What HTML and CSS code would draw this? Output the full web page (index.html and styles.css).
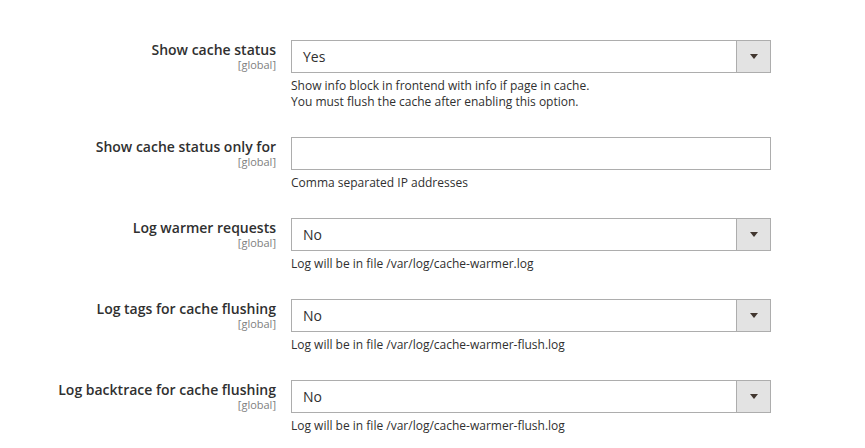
FILE: index.html
```html
<!DOCTYPE html>
<html lang="en">
<head>
<meta charset="utf-8">
<title>Cache settings</title>
<link rel="stylesheet" href="styles.css">
</head>
<body>
<div class="config">
  <div class="label"><span class="label-text">Show cache status</span><span class="scope">[global]</span></div>
  <div class="value">
    <div class="select"><span class="select-value">Yes</span><span class="select-arrow"></span></div>
    <div class="note">Show info block in frontend with info if page in cache.<br>You must flush the cache after enabling this option.</div>
  </div>

  <div class="label"><span class="label-text">Show cache status only for</span><span class="scope">[global]</span></div>
  <div class="value">
    <div class="input"></div>
    <div class="note">Comma separated IP addresses</div>
  </div>

  <div class="label"><span class="label-text">Log warmer requests</span><span class="scope">[global]</span></div>
  <div class="value">
    <div class="select"><span class="select-value">No</span><span class="select-arrow"></span></div>
    <div class="note">Log will be in file /var/log/cache-warmer.log</div>
  </div>

  <div class="label"><span class="label-text">Log tags for cache flushing</span><span class="scope">[global]</span></div>
  <div class="value">
    <div class="select"><span class="select-value">No</span><span class="select-arrow"></span></div>
    <div class="note">Log will be in file /var/log/cache-warmer-flush.log</div>
  </div>

  <div class="label"><span class="label-text">Log backtrace for cache flushing</span><span class="scope">[global]</span></div>
  <div class="value">
    <div class="select"><span class="select-value">No</span><span class="select-arrow"></span></div>
    <div class="note">Log will be in file /var/log/cache-warmer-flush.log</div>
  </div>
</div>
</body>
</html>
```
FILE: styles.css
```css
html, body {
  margin: 0;
  padding: 0;
  background: #ffffff;
}

body {
  font-family: "Open Sans", "Liberation Sans", sans-serif;
  color: #303030;
}

.config {
  display: grid;
  grid-template-columns: 276px 480px;
  column-gap: 15px;
  row-gap: 27px;
  padding-top: 40px;
}

.label {
  display: flex;
  flex-direction: column;
  align-items: flex-end;
  text-align: right;
  padding-top: 1px;
}

.label-text {
  font-size: 14px;
  font-weight: 600;
  line-height: 18px;
  color: #303030;
}

.scope {
  font-size: 11px;
  line-height: 11px;
  margin-top: 0;
  color: #808080;
}

.value {
  display: flex;
  flex-direction: column;
}

.select,
.input {
  box-sizing: border-box;
  height: 33px;
  border: 1px solid #adadad;
  background: #ffffff;
  display: flex;
  align-items: center;
}

.select-value {
  flex: 1;
  padding-left: 11px;
  font-size: 14px;
  color: #303030;
}

.select-arrow {
  align-self: stretch;
  width: 33px;
  background: #e3e3e3;
  border-left: 1px solid #adadad;
  display: flex;
  align-items: center;
  justify-content: center;
}

.select-arrow::after {
  content: "";
  width: 0;
  height: 0;
  border-left: 4px solid transparent;
  border-right: 4px solid transparent;
  border-top: 5px solid #41362f;
}

.note {
  margin-top: 5px;
  font-size: 12px;
  line-height: 16px;
  color: #303030;
}
```
